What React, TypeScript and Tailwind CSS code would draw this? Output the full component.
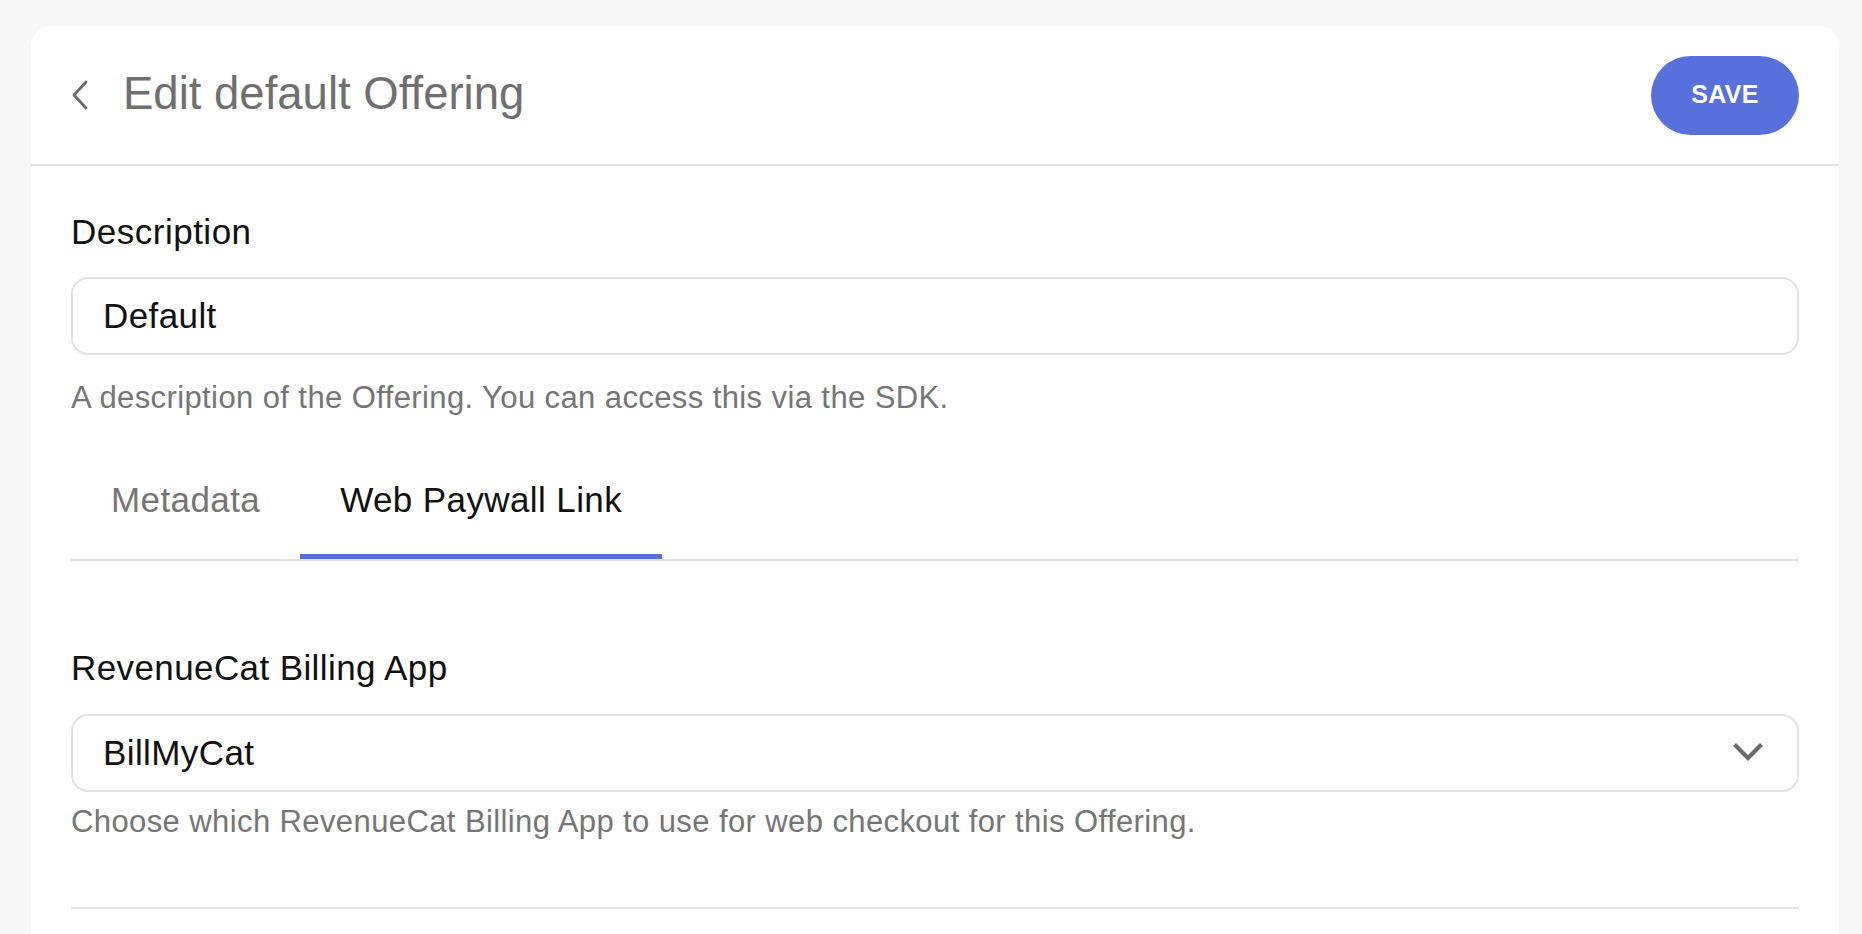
import React, { useState } from 'react';

const font = { fontFamily: '"Liberation Sans", Arial, sans-serif' };

const BackIcon = () => (
  <svg width="18" height="30" viewBox="0 0 18 30" fill="none" className="shrink-0">
    <path d="M15 2 L3 15 L15 28" stroke="#6b6b6b" strokeWidth="2.8" strokeLinecap="round" strokeLinejoin="round" />
  </svg>
);

const ChevronDown = () => (
  <svg width="30" height="20" viewBox="0 0 30 20" fill="none" className="shrink-0">
    <path d="M3 3 L15 15 L27 3" stroke="#6b6b6b" strokeWidth="4.2" strokeLinecap="square" />
  </svg>
);

export default function App() {
  const [tab, setTab] = useState<'metadata' | 'paywall'>('paywall');

  return (
    <div className="min-h-[934px] h-[934px] overflow-hidden bg-[#f6f6f6] pt-[26px] pl-[31px] pr-[23px]" style={font}>
      <div className="bg-white rounded-t-[20px] h-[960px]">
        {/* header */}
        <div className="h-[140px] px-10 flex items-center justify-between border-b-2 border-[#e2e2e2]">
          <div className="flex items-center gap-[34px]">
            <button className="flex items-center">
              <BackIcon />
            </button>
            <h1 className="text-[45.5px] leading-none text-[#6f6f6f] -mt-[2px]">Edit default Offering</h1>
          </div>
          <button className="w-[148px] h-[79px] rounded-full bg-[#5870db] text-white text-[25px] font-bold tracking-[0.3px]">
            SAVE
          </button>
        </div>

        {/* body */}
        <div className="px-10">
          <label className="block pt-[46px] text-[35px] leading-[40px] tracking-[0.5px] text-[#111]">Description</label>
          <div className="mt-[25px] h-[78px] rounded-[17px] border-2 border-[#e2e2e2] flex items-center px-[30px]">
            <input
              defaultValue="Default"
              className="w-full outline-none text-[35px] tracking-[0.4px] text-[#111] bg-transparent"
              style={font}
            />
          </div>
          <p className="mt-[25px] text-[31px] leading-[36px] tracking-[0.4px] text-[#757575]">
            A description of the Offering. You can access this via the SDK.
          </p>

          {/* tabs */}
          <div className="mt-[26px] flex border-b-2 border-[#e2e2e2]">
            <button
              onClick={() => setTab('metadata')}
              className={`h-[117px] pt-[4px] px-10 text-[35px] tracking-[0.4px] border-b-[5px] ${
                tab === 'metadata' ? 'border-[#5870db] text-[#111]' : 'border-transparent text-[#757575]'
              }`}
            >
              Metadata
            </button>
            <button
              onClick={() => setTab('paywall')}
              className={`h-[117px] pt-[4px] px-10 text-[35px] tracking-[0.4px] border-b-[5px] ${
                tab === 'paywall' ? 'border-[#5870db] text-[#111]' : 'border-transparent text-[#757575]'
              }`}
            >
              Web Paywall Link
            </button>
          </div>

          <label className="block mt-[87px] text-[35px] leading-[40px] tracking-[0.4px] text-[#111]">RevenueCat Billing App</label>
          <div className="mt-[26px] h-[78px] rounded-[17px] border-2 border-[#e2e2e2] flex items-center justify-between pl-[30px] pr-[34px]">
            <span className="text-[35px] tracking-[0.4px] text-[#111]">BillMyCat</span>
            <ChevronDown />
          </div>
          <p className="mt-[12px] text-[31px] leading-[36px] tracking-[0.4px] text-[#757575]">
            Choose which RevenueCat Billing App to use for web checkout for this Offering.
          </p>

          <div className="mt-[67px] border-t-2 border-[#e2e2e2]" />
        </div>
      </div>
    </div>
  );
}
